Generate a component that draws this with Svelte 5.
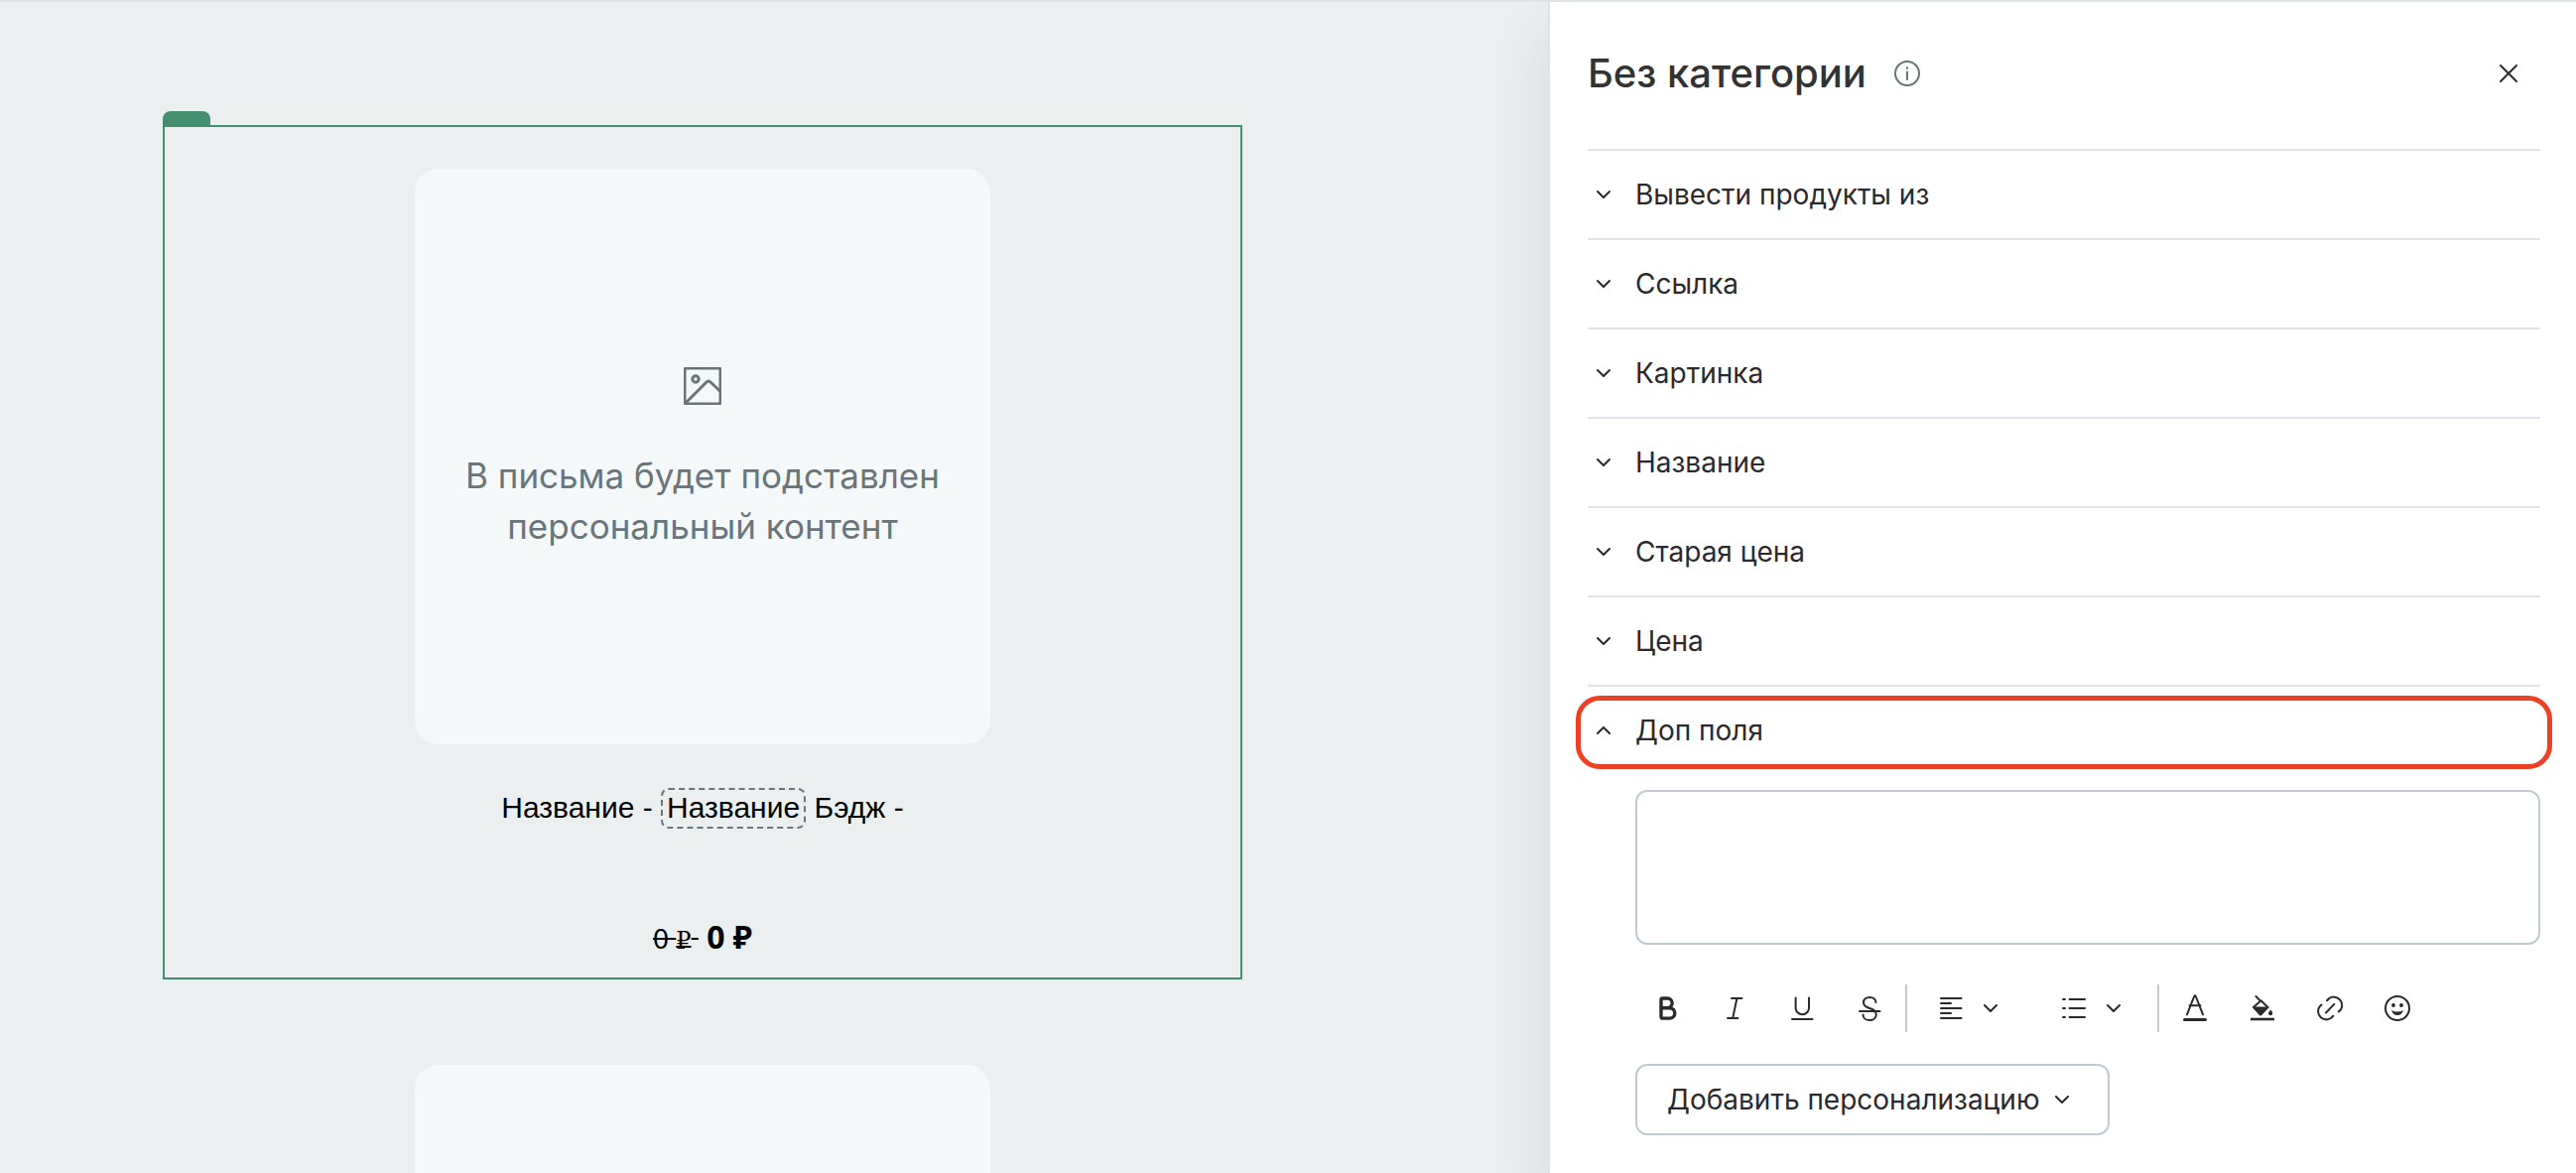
<script lang="ts">
	type Section = { id: string; title: string };
	type Tool = { name: string; label: string };

	const sections: Section[] = [
		{ id: "source", title: "Вывести продукты из" },
		{ id: "link", title: "Ссылка" },
		{ id: "picture", title: "Картинка" },
		{ id: "title", title: "Название" },
		{ id: "old-price", title: "Старая цена" },
		{ id: "price", title: "Цена" },
		{ id: "extra", title: "Доп поля" },
	];

	const textTools: Tool[] = [
		{ name: "bold", label: "Полужирный" },
		{ name: "italic", label: "Курсив" },
		{ name: "underline", label: "Подчёркнутый" },
		{ name: "strike", label: "Зачёркнутый" },
	];

	const blockTools: Tool[] = [
		{ name: "align", label: "Выравнивание" },
		{ name: "list", label: "Список" },
	];

	const insertTools: Tool[] = [
		{ name: "color", label: "Цвет текста" },
		{ name: "fill", label: "Цвет фона" },
		{ name: "link", label: "Ссылка" },
		{ name: "emoji", label: "Эмодзи" },
	];

	let opened = $state("extra");
	let extra = $state("");

	const toggle = (id: string) => {
		opened = opened === id ? "" : id;
	};
</script>

{#snippet chevron()}
	<svg class="chevron" viewBox="0 0 24 24" aria-hidden="true">
		<path d="M6 9l6 6 6-6" />
	</svg>
{/snippet}

{#snippet icon(name: string)}
	<svg class="icon" viewBox="0 0 32 32" aria-hidden="true">
		{#if name === "bold"}
			<path
				stroke-width="3.4"
				d="M16.5 15.7H10M10 7.5Q10 6 11.5 6H16.3a4.8 4.8 0 0 1 0 9.7H18.6a5.2 5.2 0 0 1 0 10.4H11.5Q10 26.1 10 24.6z"
			/>
		{:else if name === "italic"}
			<path d="M13 6H23.4M9 26H19.4M18.4 6L14.2 26" />
		{:else if name === "underline"}
			<path d="M9.6 5.5V15.5a6.7 6.7 0 0 0 13.4 0V5.5M6 27H26.5" />
		{:else if name === "strike"}
			<path
				d="M22.4 10c0-3-2.6-5.1-6.2-5.1S10 7 10 10.3c0 3.4 2.6 4.6 6 5.7s6.8 2.2 6.8 6.2c0 3.6-3 5.9-6.7 5.9s-6.6-2.3-6.6-5.7M6 19H26.5"
			/>
		{:else if name === "align"}
			<path d="M6 6H26.5M6 11H16M6 16H26.5M6 21H16M6 26H26.5" />
		{:else if name === "list"}
			<path d="M5 7H7M5 16H7M5 25H7M11.5 7H27M11.5 16H27M11.5 25H27" />
		{:else if name === "color"}
			<path d="M8 22.3L15.2 4Q16 2.5 16.8 4L24 22.3M10.5 13.3H21.5" />
			<path stroke-width="3" d="M5.5 27.5H26.5" />
		{:else if name === "fill"}
			<path d="M9.5 4L14 8.7 7 15 14 22.3 21.5 15 14.5 8.3" />
			<path class="solid" d="M6 14.5H22.5L15.5 22.7Q14 24 12.7 22.7z" />
			<path class="solid" d="M24.2 17.5Q26.5 20 26.2 21.2A2.1 2.1 0 0 1 22 21.2Q22 20 24.2 17.5z" />
			<path stroke-width="2.6" stroke-linecap="butt" d="M4 27H28" />
		{:else if name === "link"}
			<path
				d="M12 20.5L20.3 11.9M13 8.3L15 6.2A8.3 8.3 0 0 1 26.8 17.5L24.8 19.5M19.3 23.8L17.3 25.8A8.3 8.3 0 0 1 5.5 14.5L7.5 12.5"
			/>
		{:else if name === "emoji"}
			<circle cx="16" cy="16" r="12" />
			<circle class="solid" cx="12" cy="13" r="1.9" />
			<circle class="solid" cx="20" cy="13" r="1.9" />
			<path class="solid" d="M10 18Q16 21 22 18Q20.5 23 16 23T10 18z" />
		{/if}
	</svg>
{/snippet}

<div class="editor">
	<main class="canvas">
		<article class="product selected">
			<div class="placeholder">
				<svg viewBox="0 0 38 38" aria-hidden="true">
					<rect x="1" y="1" width="36" height="36" rx="2" />
					<circle cx="12" cy="12" r="3.2" />
					<path d="M2 36L23 15Q25 13 27 15L37 24.5" />
				</svg>
				<p>В письма будет подставлен персональный контент</p>
			</div>
			<p class="name">Название - <span class="variable">Название</span> Бэдж -</p>
			<p class="price"><s>0 <span class="ruble">₽</span>&nbsp;</s> <strong>0 ₽</strong></p>
		</article>
		<article class="product">
			<div class="placeholder"></div>
		</article>
	</main>

	<aside class="panel">
		<header>
			<h1>Без категории</h1>
			<button type="button" class="plain" aria-label="Подсказка">
				<svg class="info" viewBox="0 0 28 28" aria-hidden="true">
					<circle cx="14" cy="14" r="12" />
					<path d="M14 12.5V20M14 8V9" />
				</svg>
			</button>
			<button type="button" class="plain close" aria-label="Закрыть">
				<svg class="icon" viewBox="0 0 32 32" aria-hidden="true">
					<path d="M8 8L24 24M24 8L8 24" />
				</svg>
			</button>
		</header>

		{#each sections as section (section.id)}
			<section>
				<button
					type="button"
					class="toggle"
					class:marked={section.id === "extra"}
					aria-expanded={opened === section.id}
					onclick={() => toggle(section.id)}
				>
					{@render chevron()}
					{section.title}
				</button>
				{#if section.id === "extra" && opened === "extra"}
					<div class="content">
						<textarea aria-label={section.title} bind:value={extra}></textarea>
						<div class="toolbar" role="toolbar" aria-label="Форматирование">
							{#each textTools as tool}
								<button type="button" class="tool" aria-label={tool.label}>
									{@render icon(tool.name)}
								</button>
							{/each}
							<span class="divider"></span>
							{#each blockTools as tool}
								<button type="button" class="tool menu" aria-label={tool.label}>
									{@render icon(tool.name)}
									{@render chevron()}
								</button>
							{/each}
							<span class="divider"></span>
							{#each insertTools as tool}
								<button type="button" class="tool" aria-label={tool.label}>
									{@render icon(tool.name)}
								</button>
							{/each}
						</div>
						<button type="button" class="personalize">
							Добавить персонализацию
							{@render chevron()}
						</button>
					</div>
				{/if}
			</section>
		{/each}
	</aside>
</div>

<style>
	:global(body) {
		overflow: hidden;
	}

	.editor {
		--line: #dde3e8;
		--control: #bfcbd3;
		--green: #428e6f;
		--text: #29292e;

		display: flex;
		box-sizing: border-box;
		height: 100vh;
		overflow: hidden;
		border-top: 2px solid var(--line);
		background: #ebeff0;
		color: var(--text);
		font: 28px/40px Inter, sans-serif;
	}

	p,
	h1 {
		margin: 0;
	}

	button {
		padding: 0;
		border: 0;
		background: none;
		color: inherit;
		font: inherit;
		cursor: pointer;
	}

	svg {
		display: block;
		flex: none;
		fill: none;
		stroke: currentColor;
		stroke-width: 2;
		stroke-linecap: round;
		stroke-linejoin: round;
	}

	.solid {
		fill: currentColor;
		stroke: none;
	}

	.icon {
		width: 32px;
		height: 32px;
	}

	.chevron {
		width: 24px;
		height: 24px;
	}

	.canvas {
		display: flex;
		flex: 1;
		flex-direction: column;
		gap: 42px;
		min-width: 0;
		padding: 124px 308px 0 164px;
	}

	.product {
		position: relative;
		display: flex;
		flex: none;
		flex-direction: column;
		align-items: center;
		padding: 42px 0 18px;
		border: 2px solid transparent;
		color: #000;
	}

	.selected {
		border-color: var(--green);

		&::before {
			content: "";
			position: absolute;
			bottom: 100%;
			left: -2px;
			width: 48px;
			height: 16px;
			border-radius: 8px 8px 0 0;
			background: var(--green);
		}
	}

	.placeholder {
		display: flex;
		flex-direction: column;
		align-items: center;
		justify-content: center;
		gap: 46px;
		box-sizing: border-box;
		width: 580px;
		max-width: 100%;
		aspect-ratio: 1;
		padding: 6px 32px 0;
		border-radius: 24px;
		background: #f4f8f9;
		color: #6a757b;
		font-size: 35px;
		line-height: 51px;
		text-align: center;

		& svg {
			width: 38px;
			height: 38px;
			stroke-width: 3;
		}
	}

	.name {
		margin-top: 40px;
		font: 30px/48px "Liberation Sans", Arial, sans-serif;
	}

	.variable {
		padding: 1px 4px 3px;
		border: 2px dashed #6a757b;
		border-radius: 8px;
	}

	.price {
		margin-top: 84px;
		font: 32px/44px "Noto Sans", sans-serif;

		& s {
			font-size: 28px;
		}
	}

	.ruble {
		font-family: "DejaVu Serif", serif;
		font-size: 24px;
		line-height: 24px;
	}

	.panel {
		box-sizing: border-box;
		width: 1036px;
		padding: 0 36px 0 38px;
		border-left: 2px solid var(--line);
		background: #fff;
		box-shadow: 0 32px 56px rgb(40 60 60 / 12%);
	}

	header {
		display: flex;
		align-items: center;
		box-sizing: border-box;
		height: 148px;
		padding-bottom: 4px;
	}

	h1 {
		color: #333;
		font-size: 40px;
		font-weight: 500;
		line-height: 48px;
	}

	.plain {
		display: grid;
		place-items: center;
		width: 64px;
		height: 64px;
	}

	.info {
		width: 28px;
		height: 28px;
		margin-left: 18px;
		color: #65757c;
	}

	.close {
		margin-left: auto;
	}

	.toggle {
		position: relative;
		display: flex;
		align-items: center;
		gap: 20px;
		box-sizing: border-box;
		width: 100%;
		min-height: 90px;
		padding-left: 4px;
		border-top: 2px solid var(--line);
		text-align: left;

		&[aria-expanded="true"] .chevron {
			transform: rotate(180deg);
		}
	}

	.marked::after {
		content: "";
		position: absolute;
		inset: 9px -12px 5px;
		border: 5px solid #ec4125;
		border-radius: 24px;
	}

	.content {
		padding: 16px 0 32px 48px;
	}

	textarea {
		display: block;
		box-sizing: border-box;
		width: 100%;
		height: 156px;
		padding: 16px;
		border: 2px solid var(--control);
		border-radius: 12px;
		background: #fff;
		color: inherit;
		font: inherit;
		resize: none;
	}

	.toolbar {
		display: flex;
		gap: 4px;
		margin: 40px 0 32px;
	}

	.tool {
		display: flex;
		align-items: center;
		justify-content: center;
		width: 64px;
		height: 48px;
	}

	.menu {
		justify-content: flex-start;
		gap: 12px;
		width: 120px;
		padding-left: 24px;
	}

	.divider {
		width: 2px;
		background: var(--control);
	}

	.personalize {
		display: flex;
		align-items: center;
		gap: 10px;
		height: 72px;
		padding: 0 34px 0 30px;
		border: 2px solid var(--control);
		border-radius: 12px;
	}
</style>
